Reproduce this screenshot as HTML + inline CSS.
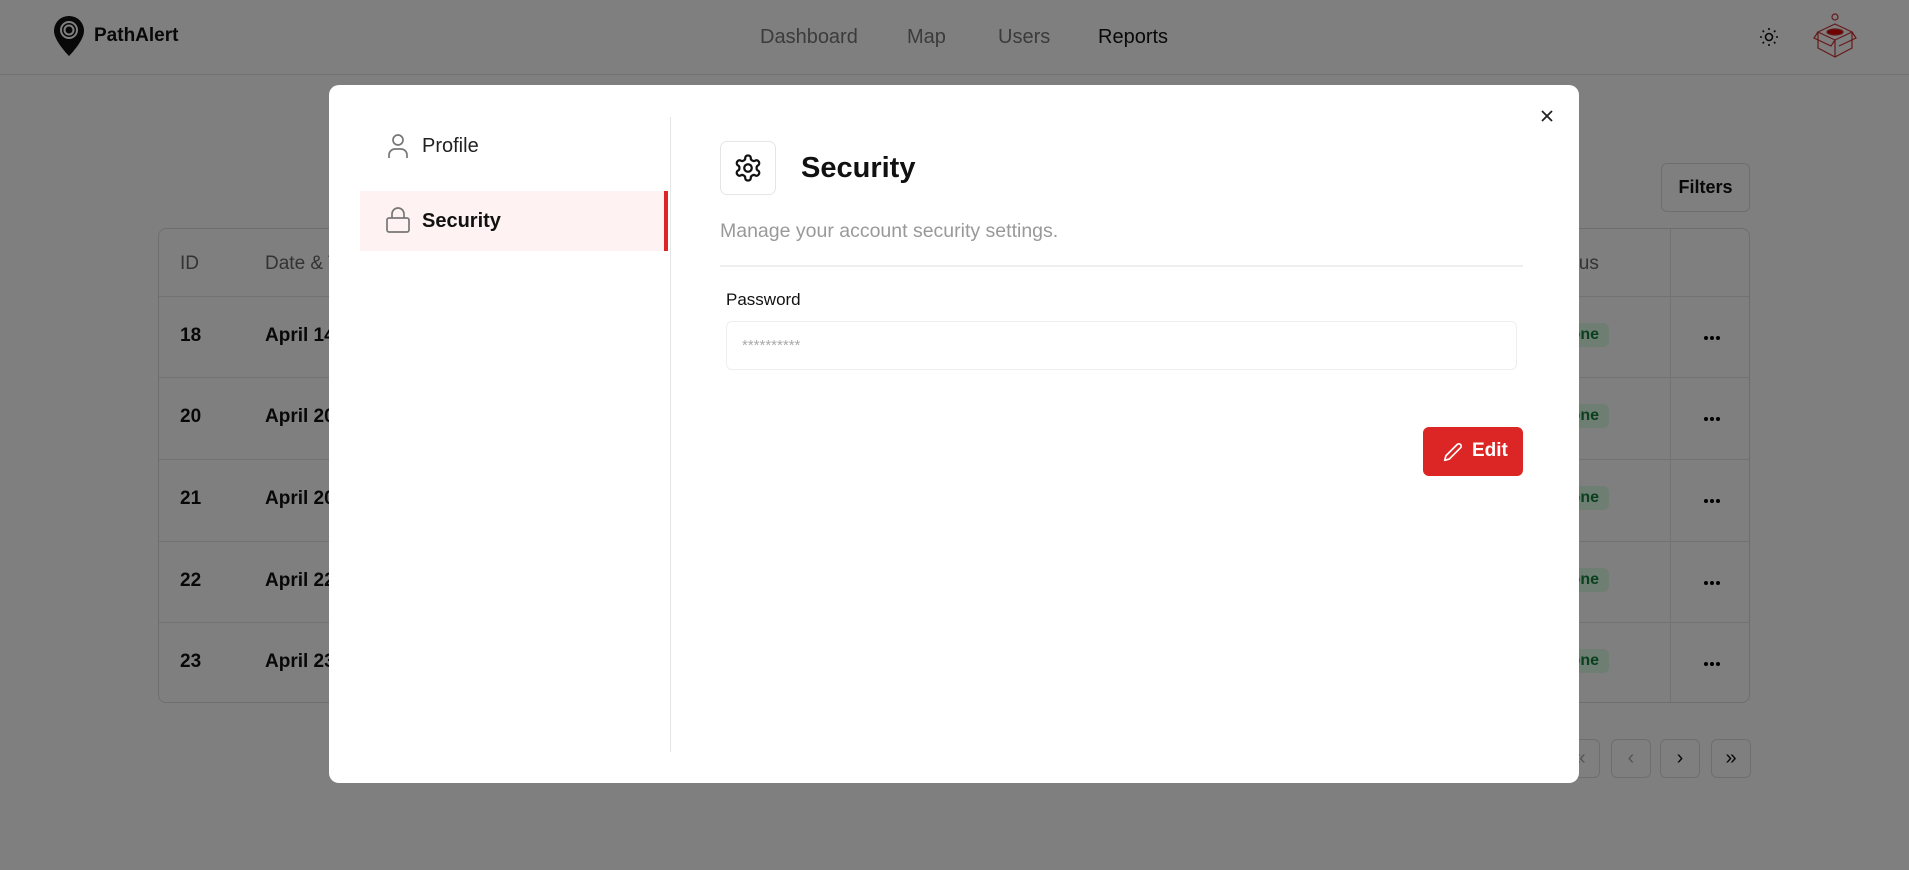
<!DOCTYPE html>
<html><head><meta charset="utf-8"><style>
*{box-sizing:border-box;margin:0;padding:0}
body{width:1909px;height:870px;overflow:hidden;background:#fff;font-family:"Liberation Sans",sans-serif;position:relative;color:#111}
.abs{position:absolute}
.hdr{left:0;top:0;width:1909px;height:75px;border-bottom:1px solid #e5e5e5}
.nav{font-size:20px;top:26px;color:#777}
.tbl{left:158px;top:228px;width:1592px;height:475px;border:1px solid #ddd;border-radius:8px}
.row{position:absolute;left:0;width:100%;border-top:1px solid #e5e5e5}
.cell{position:absolute;font-size:19px;font-weight:bold;color:#111}
.pill{position:absolute;background:#dcfce7;color:#15803d;font-size:16px;font-weight:bold;padding:3px 10px;border-radius:6px}
.dots{position:absolute;left:1544px;top:38px}
.pg{position:absolute;top:739px;width:40px;height:39px;border:1px solid #ddd;border-radius:6px;text-align:center;line-height:36px;font-size:20px}
.ov{left:0;top:0;width:1909px;height:870px;background:rgba(0,0,0,.5)}
.modal{left:329px;top:85px;width:1250px;height:698px;background:#fff;border-radius:10px}
</style></head><body>
<div class="abs hdr"></div>
<svg class="abs" style="left:52px;top:15px" width="34" height="42" viewBox="0 0 34 42"><path d="M17 1C8 1 2 8 2 16c0 10 15 25 15 25s15-15 15-25C32 8 26 1 17 1z" fill="#111"/><circle cx="17" cy="15" r="8" fill="none" stroke="#fff" stroke-width="2"/><circle cx="17" cy="15" r="4.5" fill="none" stroke="#fff" stroke-width="2"/></svg>
<div class="abs" style="left:94px;top:25px;font-size:19px;font-weight:bold">PathAlert</div>
<div class="abs nav" style="left:760px">Dashboard</div>
<div class="abs nav" style="left:907px">Map</div>
<div class="abs nav" style="left:998px">Users</div>
<div class="abs nav" style="left:1098px;color:#111;font-weight:500">Reports</div>
<svg class="abs" style="left:1759px;top:27px" width="20" height="20" viewBox="0 0 20 20" fill="none" stroke="#111" stroke-width="1.6"><circle cx="10" cy="10" r="3.5"/><path d="M10 1v2M10 17v2M1 10h2M17 10h2M3.6 3.6l1.4 1.4M15 15l1.4 1.4M3.6 16.4L5 15M15 5l1.4-1.4"/></svg>
<svg class="abs" style="left:1812px;top:12px" width="46" height="50" viewBox="0 0 46 50" fill="none" stroke="#c33" stroke-width="1.2"><circle cx="23" cy="5" r="3"/><path d="M6 20l17-8 17 8-17 8z"/><ellipse cx="23" cy="20" rx="8" ry="3" fill="#d00"/><path d="M6 20v16l17 9 17-9V20M23 28v17M6 20l-4 6 17 8 4-6M40 20l4 6-17 8"/></svg>
<div class="abs" style="left:1661px;top:163px;width:89px;height:49px;border:1px solid #ddd;border-radius:6px;text-align:center;line-height:47px;font-size:18px;font-weight:bold">Filters</div>
<div class="abs tbl">
<div class="cell" style="left:21px;top:24px;color:#666;font-weight:normal">ID</div>
<div class="cell" style="left:106px;top:24px;color:#666;font-weight:normal">Date &amp; Time</div>
<div class="cell" style="left:1386px;top:24px;color:#666;font-weight:normal">Status</div>
<div style="position:absolute;left:1511px;top:0;height:100%;border-left:1px solid #e5e5e5"></div>
<div class="row" style="top:67px"><div class="cell" style="left:21px;top:28px">18</div><div class="cell" style="left:106px;top:28px">April 14</div><div class="pill" style="left:1390px;top:26px">Done</div><svg class="dots" width="18" height="6"><circle cx="3" cy="3" r="2"/><circle cx="9" cy="3" r="2"/><circle cx="15" cy="3" r="2"/></svg></div>
<div class="row" style="top:148px"><div class="cell" style="left:21px;top:28px">20</div><div class="cell" style="left:106px;top:28px">April 20</div><div class="pill" style="left:1390px;top:26px">Done</div><svg class="dots" width="18" height="6"><circle cx="3" cy="3" r="2"/><circle cx="9" cy="3" r="2"/><circle cx="15" cy="3" r="2"/></svg></div>
<div class="row" style="top:230px"><div class="cell" style="left:21px;top:28px">21</div><div class="cell" style="left:106px;top:28px">April 20</div><div class="pill" style="left:1390px;top:26px">Done</div><svg class="dots" width="18" height="6"><circle cx="3" cy="3" r="2"/><circle cx="9" cy="3" r="2"/><circle cx="15" cy="3" r="2"/></svg></div>
<div class="row" style="top:312px"><div class="cell" style="left:21px;top:28px">22</div><div class="cell" style="left:106px;top:28px">April 22</div><div class="pill" style="left:1390px;top:26px">Done</div><svg class="dots" width="18" height="6"><circle cx="3" cy="3" r="2"/><circle cx="9" cy="3" r="2"/><circle cx="15" cy="3" r="2"/></svg></div>
<div class="row" style="top:393px"><div class="cell" style="left:21px;top:28px">23</div><div class="cell" style="left:106px;top:28px">April 23</div><div class="pill" style="left:1390px;top:26px">Done</div><svg class="dots" width="18" height="6"><circle cx="3" cy="3" r="2"/><circle cx="9" cy="3" r="2"/><circle cx="15" cy="3" r="2"/></svg></div>
</div>
<div class="pg" style="left:1560px;color:#aaa">«</div>
<div class="pg" style="left:1611px;color:#aaa">‹</div>
<div class="pg" style="left:1660px">›</div>
<div class="pg" style="left:1711px">»</div>
<div class="abs ov"></div>
<div class="abs modal"></div>
<div class="abs" style="left:670px;top:117px;height:635px;border-left:1px solid #e5e5e5"></div>
<svg class="abs" style="left:386px;top:133px" width="24" height="26" viewBox="0 0 24 26" fill="none" stroke="#777" stroke-width="1.7"><circle cx="12" cy="7" r="5"/><path d="M3 25v-3a6 6 0 0 1 6-6h6a6 6 0 0 1 6 6v3"/></svg>
<div class="abs" style="left:422px;top:135px;font-size:20px;color:#222">Profile</div>
<div class="abs" style="left:360px;top:191px;width:308px;height:60px;background:#fef2f2;border-right:4px solid #dc2626"></div>
<svg class="abs" style="left:385px;top:206px" width="26" height="28" viewBox="0 0 26 28" fill="none" stroke="#777" stroke-width="1.7"><rect x="2" y="12" width="22" height="14" rx="2"/><path d="M7 12V8a6 6 0 0 1 12 0v4"/></svg>
<div class="abs" style="left:422px;top:210px;font-size:20px;font-weight:bold">Security</div>
<svg class="abs" style="left:1538px;top:107px" width="18" height="18" viewBox="0 0 18 18" stroke="#222" stroke-width="1.8"><path d="M4 4l10 10M14 4L4 14"/></svg>
<div class="abs" style="left:720px;top:141px;width:56px;height:54px;border:1px solid #e5e5e5;border-radius:7px"></div>
<svg class="abs" style="left:733px;top:153px" width="30" height="30" viewBox="0 0 24 24" fill="none" stroke="#111" stroke-width="1.8" stroke-linejoin="round"><path d="M12.22 2h-.44a2 2 0 0 0-2 2v.18a2 2 0 0 1-1 1.73l-.43.25a2 2 0 0 1-2 0l-.15-.08a2 2 0 0 0-2.73.73l-.22.38a2 2 0 0 0 .73 2.730l.15.1a2 2 0 0 1 1 1.72v.51a2 2 0 0 1-1 1.74l-.15.09a2 2 0 0 0-.73 2.73l.22.38a2 2 0 0 0 2.73.73l.15-.08a2 2 0 0 1 2 0l.43.25a2 2 0 0 1 1 1.73V20a2 2 0 0 0 2 2h.44a2 2 0 0 0 2-2v-.18a2 2 0 0 1 1-1.73l.43-.25a2 2 0 0 1 2 0l.15.08a2 2 0 0 0 2.73-.73l.22-.39a2 2 0 0 0-.73-2.73l-.15-.08a2 2 0 0 1-1-1.74v-.5a2 2 0 0 1 1-1.74l.15-.09a2 2 0 0 0 .73-2.73l-.22-.38a2 2 0 0 0-2.73-.73l-.15.08a2 2 0 0 1-2 0l-.43-.25a2 2 0 0 1-1-1.73V4a2 2 0 0 0-2-2z"/><circle cx="12" cy="12" r="3"/></svg>
<div class="abs" style="left:801px;top:152px;font-size:29px;font-weight:bold">Security</div>
<div class="abs" style="left:720px;top:220px;font-size:19.5px;color:#999">Manage your account security settings.</div>
<div class="abs" style="left:720px;top:265px;width:803px;border-top:2px solid #eee"></div>
<div class="abs" style="left:726px;top:290px;font-size:17px;font-weight:500;color:#111">Password</div>
<div class="abs" style="left:726px;top:321px;width:791px;height:49px;border:1px solid #eee;border-radius:6px;padding-left:15px;line-height:47px;font-size:15px;color:#aaa">**********</div>
<div class="abs" style="left:1423px;top:427px;width:100px;height:49px;background:#dc2626;border-radius:6px"></div>
<svg class="abs" style="left:1443px;top:442px" width="20" height="20" viewBox="0 0 24 24" fill="none" stroke="#fff" stroke-width="2" stroke-linejoin="round"><path d="M17 3a2.8 2.8 0 0 1 4 4L7.5 20.5 2 22l1.5-5.5z"/></svg>
<div class="abs" style="left:1472px;top:440px;font-size:19px;font-weight:bold;color:#fff">Edit</div>
</body></html>
